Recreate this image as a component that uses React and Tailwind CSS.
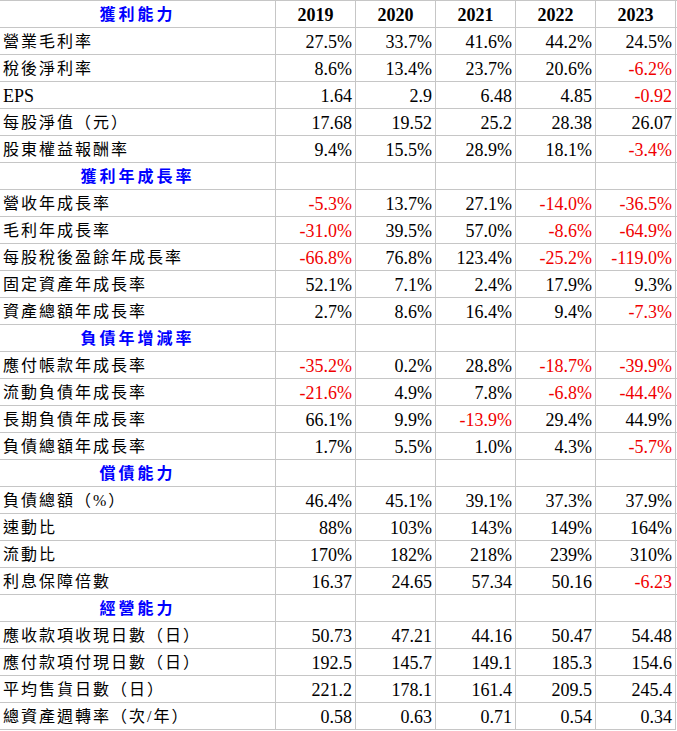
import React from "react";

const years = ["2019", "2020", "2021", "2022", "2023"];

const sections = [
  {
    title: "獲利能力",
    years: true,
    rows: [
      ["營業毛利率", "27.5%", "33.7%", "41.6%", "44.2%", "24.5%"],
      ["稅後淨利率", "8.6%", "13.4%", "23.7%", "20.6%", "-6.2%"],
      ["EPS", "1.64", "2.9", "6.48", "4.85", "-0.92"],
      ["每股淨值（元）", "17.68", "19.52", "25.2", "28.38", "26.07"],
      ["股東權益報酬率", "9.4%", "15.5%", "28.9%", "18.1%", "-3.4%"],
    ],
  },
  {
    title: "獲利年成長率",
    rows: [
      ["營收年成長率", "-5.3%", "13.7%", "27.1%", "-14.0%", "-36.5%"],
      ["毛利年成長率", "-31.0%", "39.5%", "57.0%", "-8.6%", "-64.9%"],
      ["每股稅後盈餘年成長率", "-66.8%", "76.8%", "123.4%", "-25.2%", "-119.0%"],
      ["固定資產年成長率", "52.1%", "7.1%", "2.4%", "17.9%", "9.3%"],
      ["資產總額年成長率", "2.7%", "8.6%", "16.4%", "9.4%", "-7.3%"],
    ],
  },
  {
    title: "負債年增減率",
    rows: [
      ["應付帳款年成長率", "-35.2%", "0.2%", "28.8%", "-18.7%", "-39.9%"],
      ["流動負債年成長率", "-21.6%", "4.9%", "7.8%", "-6.8%", "-44.4%"],
      ["長期負債年成長率", "66.1%", "9.9%", "-13.9%", "29.4%", "44.9%"],
      ["負債總額年成長率", "1.7%", "5.5%", "1.0%", "4.3%", "-5.7%"],
    ],
  },
  {
    title: "償債能力",
    rows: [
      ["負債總額（%）", "46.4%", "45.1%", "39.1%", "37.3%", "37.9%"],
      ["速動比", "88%", "103%", "143%", "149%", "164%"],
      ["流動比", "170%", "182%", "218%", "239%", "310%"],
      ["利息保障倍數", "16.37", "24.65", "57.34", "50.16", "-6.23"],
    ],
  },
  {
    title: "經營能力",
    rows: [
      ["應收款項收現日數（日）", "50.73", "47.21", "44.16", "50.47", "54.48"],
      ["應付款項付現日數（日）", "192.5", "145.7", "149.1", "185.3", "154.6"],
      ["平均售貨日數（日）", "221.2", "178.1", "161.4", "209.5", "245.4"],
      ["總資產週轉率（次/年）", "0.58", "0.63", "0.71", "0.54", "0.34"],
    ],
  },
];

function HeaderRow({ title, showYears }) {
  return (
    <div className="flex h-[27px] border-t border-[#c6c6c6]">
      <div className="w-[276px] border-r border-[#c6c6c6] flex items-center justify-center pt-[1px] font-bold text-[#0000ff] tracking-[3px] text-[16px]">
        {title}
      </div>
      {years.map((y) => (
        <div
          key={y}
          className="w-[80px] border-r border-[#c6c6c6] flex items-center justify-center pt-[2px] font-bold text-black text-[18px]"
        >
          {showYears ? y : ""}
        </div>
      ))}
    </div>
  );
}

function DataRow({ row }) {
  const [label, ...vals] = row;
  const latin = /^[A-Za-z]+$/.test(label);
  return (
    <div className="flex h-[27px] border-t border-[#c6c6c6]">
      <div
        className={
          "w-[276px] border-r border-[#c6c6c6] flex items-center pl-[3px] text-black " +
          (latin ? "text-[18px] pt-[2px]" : "text-[16px] tracking-[2px] pt-[1px]")
        }
      >
        {label}
      </div>
      {vals.map((v, i) => (
        <div
          key={i}
          className={
            "w-[80px] border-r border-[#c6c6c6] flex items-center justify-end pr-[3px] pt-[2px] text-[18px] " +
            (v.startsWith("-") ? "text-[#f00000]" : "text-black")
          }
        >
          {v}
        </div>
      ))}
    </div>
  );
}

export default function App() {
  return (
    <div
      className="bg-white w-[677px] leading-none"
      style={{ fontFamily: '"Liberation Serif", "Noto Sans CJK TC", serif' }}
    >
      {sections.map((s) => (
        <div key={s.title}>
          <HeaderRow title={s.title} showYears={!!s.years} />
          {s.rows.map((r) => (
            <DataRow key={r[0]} row={r} />
          ))}
        </div>
      ))}
      <div className="border-t border-[#c6c6c6] w-[676px]" />
    </div>
  );
}
